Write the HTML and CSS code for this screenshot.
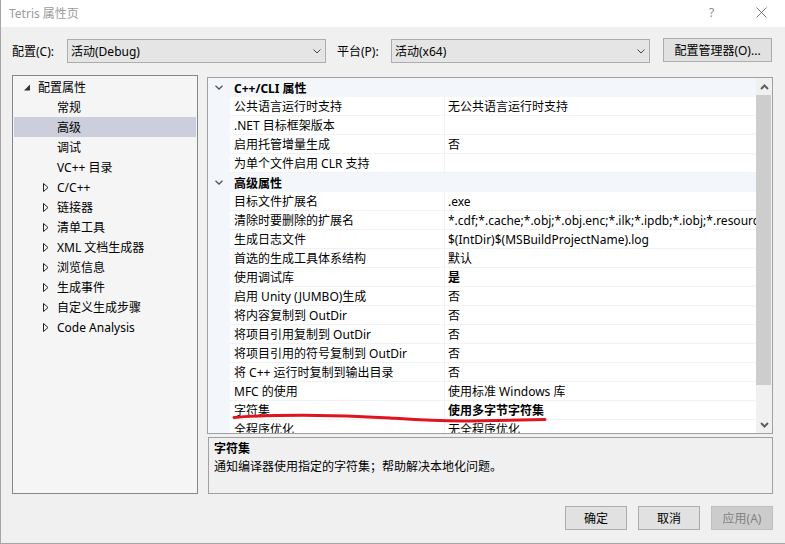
FILE: index.html
```html
<!DOCTYPE html>
<html lang="zh-CN">
<head>
    <meta charset="UTF-8">
    <title>Tetris 属性页</title>
    <link rel="stylesheet" href="styles.css">
</head>
<body>
<div class="window">
    <div class="titlebar">
        <span class="title">Tetris 属性页</span>
        <span class="help">?</span>
        <svg class="close" width="11" height="11" viewBox="0 0 11 11"><path d="M0.5 0.5 L10.5 10.5 M10.5 0.5 L0.5 10.5" stroke="#777" stroke-width="1" fill="none"/></svg>
    </div>

    <div class="toolbar">
        <span class="label label-config">配置(C):</span>
        <div class="combo">
            <span>活动(Debug)</span>
            <svg width="8" height="5" viewBox="0 0 8 5"><path d="M0.5 0.5 L4 4 L7.5 0.5" stroke="#444" fill="none"/></svg>
        </div>
        <span class="label label-platform">平台(P):</span>
        <div class="combo">
            <span>活动(x64)</span>
            <svg width="8" height="5" viewBox="0 0 8 5"><path d="M0.5 0.5 L4 4 L7.5 0.5" stroke="#444" fill="none"/></svg>
        </div>
        <button class="btn btn-manager">配置管理器(O)...</button>
    </div>

    <div class="main">
        <div class="tree">
            <div class="node l0">
                <svg class="twisty" width="14" height="7" viewBox="0 0 14 7"><polygon points="6,0.5 6,6.5 0,6.5" fill="#333"/></svg>
                <span>配置属性</span>
            </div>
            <div class="node leaf">常规</div>
            <div class="node leaf selected">高级</div>
            <div class="node leaf">调试</div>
            <div class="node leaf">VC++ 目录</div>
            <div class="node l1"><svg class="twisty" width="14" height="9" viewBox="0 0 14 9"><polygon points="0.5,0.5 5,4.5 0.5,8.5" fill="none" stroke="#222"/></svg><span>C/C++</span></div>
            <div class="node l1"><svg class="twisty" width="14" height="9" viewBox="0 0 14 9"><polygon points="0.5,0.5 5,4.5 0.5,8.5" fill="none" stroke="#222"/></svg><span>链接器</span></div>
            <div class="node l1"><svg class="twisty" width="14" height="9" viewBox="0 0 14 9"><polygon points="0.5,0.5 5,4.5 0.5,8.5" fill="none" stroke="#222"/></svg><span>清单工具</span></div>
            <div class="node l1"><svg class="twisty" width="14" height="9" viewBox="0 0 14 9"><polygon points="0.5,0.5 5,4.5 0.5,8.5" fill="none" stroke="#222"/></svg><span>XML 文档生成器</span></div>
            <div class="node l1"><svg class="twisty" width="14" height="9" viewBox="0 0 14 9"><polygon points="0.5,0.5 5,4.5 0.5,8.5" fill="none" stroke="#222"/></svg><span>浏览信息</span></div>
            <div class="node l1"><svg class="twisty" width="14" height="9" viewBox="0 0 14 9"><polygon points="0.5,0.5 5,4.5 0.5,8.5" fill="none" stroke="#222"/></svg><span>生成事件</span></div>
            <div class="node l1"><svg class="twisty" width="14" height="9" viewBox="0 0 14 9"><polygon points="0.5,0.5 5,4.5 0.5,8.5" fill="none" stroke="#222"/></svg><span>自定义生成步骤</span></div>
            <div class="node l1"><svg class="twisty" width="14" height="9" viewBox="0 0 14 9"><polygon points="0.5,0.5 5,4.5 0.5,8.5" fill="none" stroke="#222"/></svg><span>Code Analysis</span></div>
        </div>

        <div class="right">
            <div class="grid">
                <div class="rows">
                    <div class="cat">
                        <svg class="chev" width="22" height="5" viewBox="0 0 22 5"><path d="M7.5 0.8 L11 4 L14.5 0.8" stroke="#555" stroke-width="1.3" fill="none"/></svg>
                        <span>C++/CLI 属性</span>
                    </div>
                    <div class="prop"><span class="gutter"></span><span class="name">公共语言运行时支持</span><span class="value">无公共语言运行时支持</span></div>
                    <div class="prop"><span class="gutter"></span><span class="name">.NET 目标框架版本</span><span class="value"></span></div>
                    <div class="prop"><span class="gutter"></span><span class="name">启用托管增量生成</span><span class="value">否</span></div>
                    <div class="prop"><span class="gutter"></span><span class="name">为单个文件启用 CLR 支持</span><span class="value"></span></div>
                    <div class="cat">
                        <svg class="chev" width="22" height="5" viewBox="0 0 22 5"><path d="M7.5 0.8 L11 4 L14.5 0.8" stroke="#555" stroke-width="1.3" fill="none"/></svg>
                        <span>高级属性</span>
                    </div>
                    <div class="prop"><span class="gutter"></span><span class="name">目标文件扩展名</span><span class="value">.exe</span></div>
                    <div class="prop"><span class="gutter"></span><span class="name">清除时要删除的扩展名</span><span class="value">*.cdf;*.cache;*.obj;*.obj.enc;*.ilk;*.ipdb;*.iobj;*.resources;*.tlb;*.tli;*.tlh;*.tmp;*.rsp;*.pgc;*.pgd</span></div>
                    <div class="prop"><span class="gutter"></span><span class="name">生成日志文件</span><span class="value">$(IntDir)$(MSBuildProjectName).log</span></div>
                    <div class="prop"><span class="gutter"></span><span class="name">首选的生成工具体系结构</span><span class="value">默认</span></div>
                    <div class="prop"><span class="gutter"></span><span class="name">使用调试库</span><span class="value bold">是</span></div>
                    <div class="prop"><span class="gutter"></span><span class="name">启用 Unity (JUMBO)生成</span><span class="value">否</span></div>
                    <div class="prop"><span class="gutter"></span><span class="name">将内容复制到 OutDir</span><span class="value">否</span></div>
                    <div class="prop"><span class="gutter"></span><span class="name">将项目引用复制到 OutDir</span><span class="value">否</span></div>
                    <div class="prop"><span class="gutter"></span><span class="name">将项目引用的符号复制到 OutDir</span><span class="value">否</span></div>
                    <div class="prop"><span class="gutter"></span><span class="name">将 C++ 运行时复制到输出目录</span><span class="value">否</span></div>
                    <div class="prop"><span class="gutter"></span><span class="name">MFC 的使用</span><span class="value">使用标准 Windows 库</span></div>
                    <div class="prop current"><span class="gutter"></span><span class="name">字符集</span><span class="value bold">使用多字节字符集</span></div>
                    <div class="prop"><span class="gutter"></span><span class="name">全程序优化</span><span class="value">无全程序优化</span></div>
                </div>
                <div class="scrollbar">
                    <div class="sb-btn">
                        <svg width="9" height="6" viewBox="0 0 9 6"><path d="M1 5 L4.5 1.5 L8 5" stroke="#606060" stroke-width="2" fill="none"/></svg>
                    </div>
                    <div class="sb-thumb"></div>
                    <div class="sb-track"></div>
                    <div class="sb-btn">
                        <svg width="9" height="6" viewBox="0 0 9 6"><path d="M1 1 L4.5 4.5 L8 1" stroke="#606060" stroke-width="2" fill="none"/></svg>
                    </div>
                </div>
            </div>
            <div class="desc">
                <div class="desc-title">字符集</div>
                <div class="desc-text">通知编译器使用指定的字符集；帮助解决本地化问题。</div>
            </div>
        </div>
    </div>

    <div class="buttons">
        <button class="btn">确定</button>
        <button class="btn">取消</button>
        <button class="btn disabled">应用(A)</button>
    </div>

    <!-- hand drawn red mark over the 字符集 row -->
    <svg class="mark" width="785" height="544" viewBox="0 0 785 544">
        <path d="M234 417.5 C270 414.5 330 414 390 418 C420 420 440 421.5 470 421 L545 419.5" stroke="#e0141e" stroke-width="3" fill="none" stroke-linecap="round"/>
    </svg>
</div>
</body>
</html>
```

FILE: styles.css
```css
* {
    box-sizing: border-box;
}
body {
    margin: 0;
    font-family: "Noto Sans", "Noto Sans CJK SC", sans-serif;
    font-size: 12px;
    color: #000;
    background-color: #f0f0f0;
}
.window {
    position: relative;
    width: 785px;
    height: 544px;
    background-color: #f0f0f0;
    border-left: 1px solid #a6a6a6;
    border-bottom: 1px solid #a6a6a6;
    overflow: hidden;
}
.titlebar {
    height: 27px;
    background-color: #fff;
    display: flex;
    align-items: center;
    padding-left: 8px;
}
.title {
    color: #9a9a9a;
    flex: 1;
    padding-bottom: 2px;
}
.help {
    color: #8a8a8a;
    width: 47px;
    padding-bottom: 2px;
}
.close {
    margin-right: 18px;
    margin-bottom: 3px;
}
.toolbar {
    display: flex;
    align-items: center;
    height: 25px;
    margin-top: 11px;
    padding-left: 11px;
}
.label {
    white-space: nowrap;
}
.label-config {
    width: 55px;
}
.label-platform {
    width: 54px;
    margin-left: 11px;
}
.combo {
    width: 259px;
    height: 24px;
    margin-top: 1px;
    border: 1px solid #adadad;
    background-color: #e5e5e5;
    display: flex;
    align-items: center;
    justify-content: space-between;
    padding: 0 4px 0 3px;
}
.combo svg {
    margin-top: 1px;
}
.btn {
    font-family: inherit;
    font-size: 12px;
    color: #000;
    height: 24px;
    border: 1px solid #adadad;
    background-color: #e1e1e1;
    padding: 0;
}
.btn-manager {
    width: 109px;
    margin-left: 13px;
    margin-top: -1px;
}
.main {
    display: flex;
    margin-top: 12px;
    padding-left: 11px;
    height: 419px;
}
.tree {
    width: 186px;
    height: 419px;
    border: 1px solid #828790;
    background-color: #f5f5f5;
    padding: 1px;
}
.node {
    height: 20px;
    display: flex;
    align-items: center;
    white-space: nowrap;
}
.node.l0 {
    padding-left: 10px;
}
.node.l1 {
    padding-left: 29px;
}
.node.leaf {
    padding-left: 43px;
}
.node.selected {
    background-color: #cccedb;
}
.twisty {
    flex: none;
}
.right {
    width: 566px;
    margin-left: 9px;
    padding-top: 2px;
}
.grid {
    height: 357px;
    border: 1px solid #a0a0a0;
    background-color: #fff;
    display: flex;
    overflow: hidden;
}
.rows {
    flex: 1;
    overflow: hidden;
}
.cat {
    height: 19px;
    background-color: #f3f6fb;
    display: flex;
    align-items: center;
    font-weight: bold;
    white-space: nowrap;
}
.chev {
    flex: none;
    margin-right: 4px;
    margin-top: -1px;
}
.prop {
    height: 19px;
    display: grid;
    grid-template-columns: 22px 215px 1fr;
    white-space: nowrap;
}
.gutter {
    background-color: #f3f6fb;
}
.name,
.value {
    border-bottom: 1px solid #f0f2f6;
    padding-top: 2px;
    line-height: 16px;
    overflow: hidden;
}
.name {
    padding-left: 4px;
    border-right: 1px solid #f0f2f6;
}
.value {
    padding-left: 3px;
}
.bold {
    font-weight: bold;
}
.scrollbar {
    width: 16px;
    background-color: #f0f0f0;
    display: flex;
    flex-direction: column;
}
.sb-btn {
    height: 17px;
    display: flex;
    align-items: center;
    justify-content: center;
}
.sb-thumb {
    height: 290px;
    margin-right: 1px;
    background-color: #cdcdcd;
}
.sb-track {
    flex: 1;
}
.desc {
    height: 57px;
    margin-top: 3px;
    margin-left: 1px;
    border: 1px solid #a0a0a0;
    padding: 2px 5px;
    line-height: 18px;
}
.desc-title {
    font-weight: bold;
}
.buttons {
    display: flex;
    justify-content: flex-end;
    gap: 11px;
    margin-top: 12px;
    padding-right: 12px;
}
.buttons .btn {
    width: 62px;
}
.buttons .btn.disabled {
    background-color: #cccccc;
    border-color: #bfbfbf;
    color: #838383;
}
.mark {
    position: absolute;
    left: -1px;
    top: 0;
    pointer-events: none;
}
```
